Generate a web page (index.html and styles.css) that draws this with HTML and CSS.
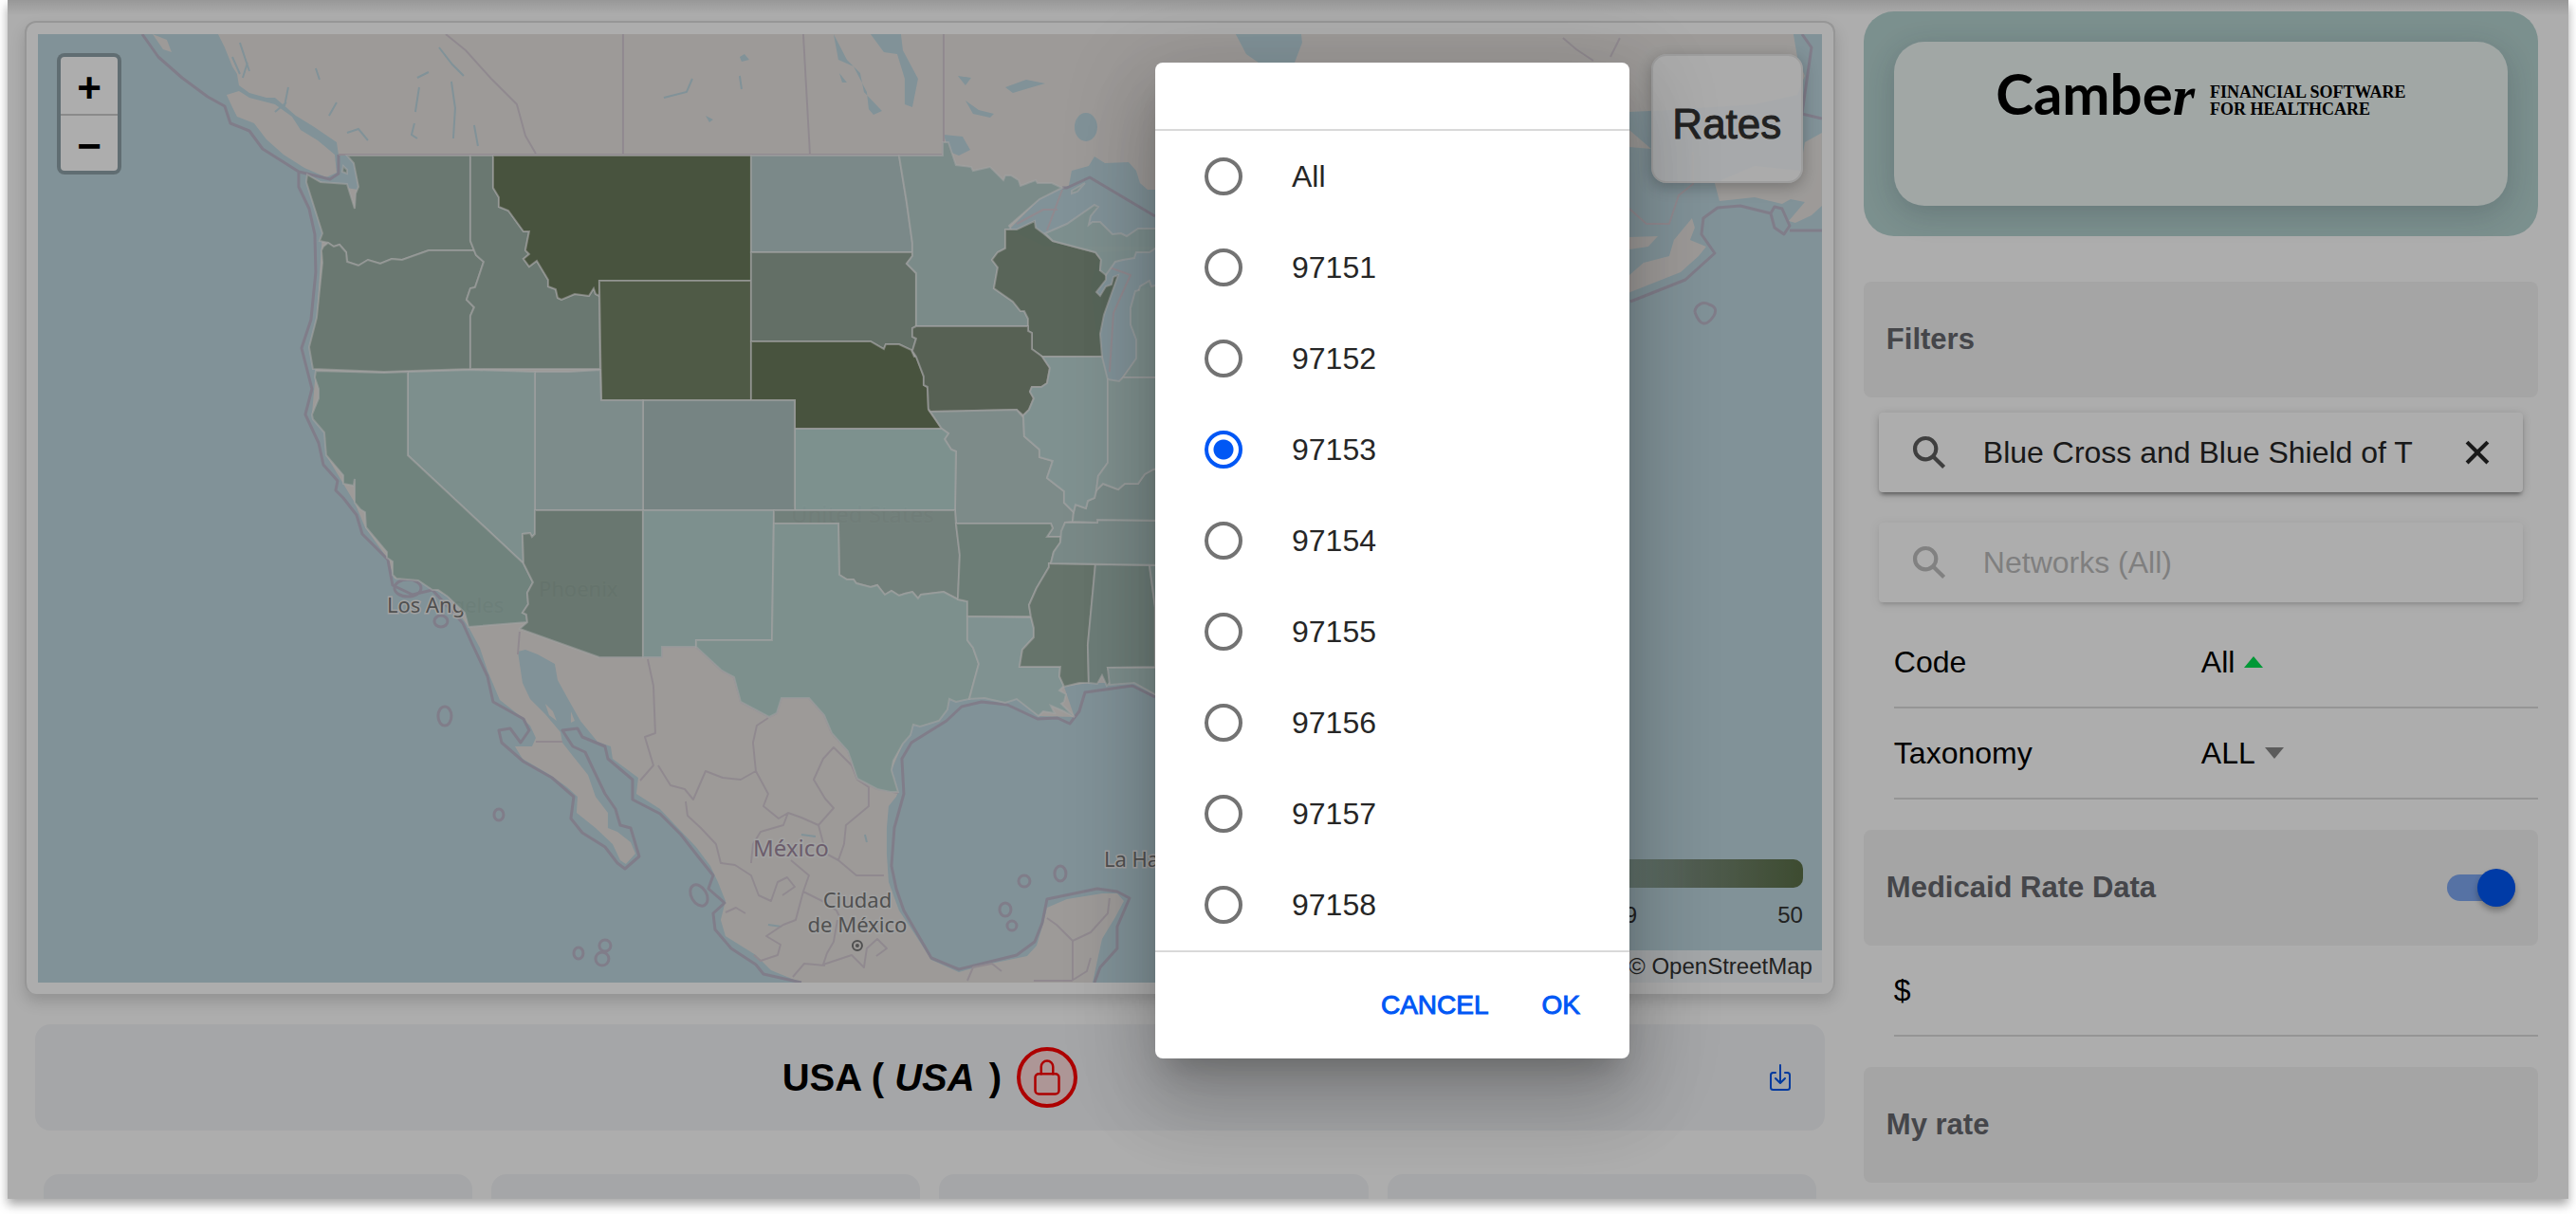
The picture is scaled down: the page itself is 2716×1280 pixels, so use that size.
FILE: index.html
```html
<!DOCTYPE html>
<html lang="en">
<head>
    <meta charset="UTF-8">
    <title>Rates Map</title>
    <link rel="stylesheet" href="styles.css">
</head>
<body>
    <div class="app">
        <main class="content">
            <section class="map-card">
                <div class="map">
                    <svg class="map-svg" viewBox="40 36 1881 1000" preserveAspectRatio="xMidYMid slice">
                        <!-- mainland -->
                        <path class="land" d="M230 36L237 50 245 70 250 78 252 90 263 98 281 103 290 103 312 122 330 133 355 150 357 163 372 164 378 200 345 195 324 184 323 192 340 246 334 335 326 366 333 391 329 437 342 456 344 480 362 510 374 530 385 556 408 588 416 610 441 612 472 629 494 661 506 683 514 707 527 738 546 753 559 765 565 778 561 787 543 787 551 800 580 817 598 830 609 840 608 857 628 873 646 890 654 907 660 911 670 900 665 888 651 877 641 873 641 857 628 840 620 817 604 797 593 783 591 772 575 753 559 737 551 720 548 700 546 687 554 685 567 690 585 700 588 717 599 737 612 760 630 782 644 787 646 800 673 820 671 837 696 853 712 870 734 893 749 913 757 930 765 950 760 970 765 987 797 1007 813 1023 847 1037 1152 1037 1157 1013 1162 990 1176 967 1185 950 1178 942 1162 942 1125 948 1104 957 1099 977 1093 997 1083 1008 1040 1017 1011 1025 982 1012 966 987 948 960 937 930 935 900 935 873 937 850 945 840 947 835 940 812 952 784 963 764 990 760 1001 737 1040 736 1072 737 1095 755 1133 756 1122 724 1148 720 1196 720 1230 740 1400 600 1600 380 1719 308 1772 287 1791 270 1799 260 1782 253 1787 240 1784 230 1765 253 1760 270 1733 277 1718 290 1718 263 1738 260 1748 249 1718 250 1700 200 1718 155 1741 157 1718 137 1700 125 1718 118 1760 116 1850 110 1895 100 1903 80 1895 60 1891 36Z"/>
                        <path class="land" d="M239 100L252 96 263 103 290 110 308 123 317 137 335 148 353 163 355 182 344 187 321 177 299 163 281 147 268 130 250 123 245 113ZM161 36L176 42 181 55 172 52ZM1808 193L1813 212 1850 208 1879 215 1888 210 1903 213 1886 233 1893 235 1910 227 1921 217 1921 140 1903 150 1898 180 1850 175ZM575 742l8 8 4 10-8-6zM602 750l4 10-4 2z"/>
                        <!-- lakes -->
                        <path class="water" d="M1064 242L1096 210 1120 198 1127 196 1130 180 1148 175 1154 165 1165 172 1190 171 1198 180 1202 193 1210 200 1240 200 1240 260 1102 260ZM1160 266L1230 262 1230 300 1200 305 1198 378 1180 402 1168 400 1156 352 1150 300ZM879 36L893 63 907 77 911 97 930 117 921 121 916 115 914 97 900 70 884 63ZM918 36L950 36 952 53 968 83 962 113 954 110 954 83 946 57 932 55ZM885 77l8 10-5 0zM1303 36L1314 57 1327 66 1365 66 1373 45 1372 36ZM995 142l20 2 8 14-12 6-10-4zM1018 106l14 10 16 4-4 4-18-4zM1060 92l22-8 20 4-14 4-20 6zM1010 80l14 2-6 8zM744 122l8 4-4 3zM780 60l5-3 5 6-8 2z"/>
                        <ellipse class="water" cx="1145" cy="134" rx="12" ry="15"/>
                        <path class="river" d="M245 60l8 18M253 45l10 30M261 66l-5 16M300 112l4-20M290 118l12-10M333 72l4 12M355 108l-8 14M440 82l12-6M438 118l4-26M437 130l-3 12 6 4M476 86l4 28-2 32M500 132l4 22M463 50l14 18 12 12M700 103l24-6 6-14M366 140l12-4 10 12M780 80l2 14M845 880l15 2M810 975l14 2M912 880l2 8"/>
                        <!-- borders -->
                        <path class="sea-border" d="M150 36L167 60 192 82 219 102 237 112 243 130 263 138 277 157 315 181 348 189 357 183 357 163M315 181L315 197 326 220 332 247 333 287 328 337 318 367 329 410 322 437 336 467 341 490 356 507 354 517 362 525 376 543 382 563 409 590 414 617 435 627 456 622 488 657 497 677 514 713 520 740 552 758 558 770 549 783 538 768 526 770 529 783 552 803 582 820 605 840 602 863 614 878 638 893 651 910 659 916 674 903 665 873 654 870 649 853 638 837 625 810 617 793 604 787 593 770 609 768 614 777 638 787 641 800 667 822 667 843 696 858 718 880 736 903 752 923 747 937 764 952 752 963 754 980 771 1000 797 1017 805 1027 845 1036"/>
                        <path class="sea-border" d="M1154 1036L1160 1020 1178 1000 1178 977 1191 947 1178 940 1157 937 1104 948 1099 973 1091 993 1072 1007 1011 1022 982 1010 953 960 945 937 940 913 943 873 953 837 951 800 961 783 998 760 1014 745 1035 740 1062 743 1094 758 1115 757 1128 763 1138 750 1144 730 1194 723 1218 735"/>
                        <path class="sea-border" d="M1719 318L1777 295 1808 267 1794 247 1796 230 1811 219 1835 217 1867 225 1871 218 1879 220 1887 238 1881 247 1871 240 1867 225M1887 243H1921M1900 36L1910 50 1900 120 1921 125M1787 329a10 10 0 0 1 15-8q10 3 5 12-12 18-20-4M1120 198h5L1149 187 1218 228"/>
                        <path class="border" d="M357 163H994V150M470 36L491 53 518 83 545 110 554 143 565 162M657 36V163M847 36L854 162M995 36V150M1120 200L1104 243M1648 40l14 12 18 12M1698 60l10-20M1718 220l18 16h24l10-30 15-12V160M1072 236L1100 221H1115M1170 392L1174 330 1192 290 1170 282"/>
                        <path class="border" d="M632 693H698V682H734L761 707 774 714 781 740 811 756 819 752 824 736H853L869 754 877 773 894 792 904 821 925 832 947 836"/>
                        <path class="border" d="M683 695L689 723 691 773 680 777 689 807 675 823M694 807L707 828 722 832 731 843 744 813 762 820 781 822 797 813 794 783 798 765 810 757M797 813L810 837 805 850 821 863 831 857 845 862 863 870 879 852 870 842 858 822 868 800 879 788 898 807 904 822 916 830 916 850 892 870 890 890 884 907 903 923 932 923M723 845L725 860 739 873 755 890 760 910 775 912 792 923 800 944 813 950 820 930 830 925 838 935 825 944M760 910l2 0M786 963L776 957 765 962M792 910L794 890 802 877 826 870 831 857M834 907L853 923 847 940 839 970 826 975 808 987 823 996 820 1007 802 1013 795 1007M847 940l20 10 15 10 5 10M868 1017L872 1005 879 993 883 970M868 1017L898 1007 911 1020 914 1000 925 990 935 1000 924 1008M836 1030l12-14 22 2M863 870l8 30 13 7M1104 968L1114 975 1131 992 1150 983 1168 963 1170 947M1131 992V1033M1020 1034l6-14 20-4 10 8M1090 1034h40l16-10 4-14M565 782h28M546 690l2-24"/>
                        <g class="sea-border">
                            <ellipse cx="469" cy="755" rx="7" ry="10"/>
                            <ellipse cx="526" cy="859" rx="5" ry="6"/>
                            <ellipse cx="610" cy="1005" rx="5" ry="6"/>
                            <ellipse cx="638" cy="997" rx="6" ry="6"/>
                            <ellipse cx="635" cy="1011" rx="7" ry="7"/>
                            <ellipse cx="737" cy="944" rx="8" ry="12" transform="rotate(-30 737 944)"/>
                            <ellipse cx="1080" cy="929" rx="6" ry="6"/>
                            <ellipse cx="1118" cy="921" rx="6" ry="8"/>
                            <ellipse cx="1060" cy="959" rx="6" ry="7"/>
                            <ellipse cx="1067" cy="976" rx="5" ry="5"/>
                            <ellipse cx="430" cy="620" rx="14" ry="9"/>
                            <ellipse cx="465" cy="655" rx="7" ry="6"/>
                        </g>
                        <!-- place names -->
                        <g class="place">
                            <text x="408" y="646">Los Angeles</text>
                            <text x="568" y="629">Phoenix</text>
                            <text x="904" y="957" text-anchor="middle">Ciudad</text>
                            <text x="904" y="983" text-anchor="middle">de México</text>
                            <text x="1164" y="914">La Habana</text>
                        </g>
                        <g class="country">
                            <text x="794" y="903">México</text>
                            <text x="834" y="551">United States</text>
                        </g>
                        <circle class="capital" cx="904" cy="997" r="5"/>
                        <circle class="capital-dot" cx="904" cy="997" r="2"/>
                        <!-- states -->
                        <g class="states">
                            <path fill="#99afa3" d="M366 164L373 172 378 197 375 204 374 220 366 194 338 192 324 184 323 192 340 246 337 254 346 256 352 260 358 258 365 266 366 276 378 280 388 274 401 278 413 273 424 274 452 264 500 264 496 254V164ZM362 175l4 4v4l-5-2z"/>
                            <path fill="#99afa3" d="M346 256L341 260 339 264 340 277 334 335 326 366 330 389 405 392 496 389V333L500 324 492 316 496 304 501 303 510 276 502 269 500 264 452 264 424 274 413 273 401 278 388 274 378 280 366 276 365 266 358 258 352 260Z"/>
                            <path fill="#99afa3" d="M496 164H520V198L526 208V218L536 222 552 244H558L554 264 558 268 552 273 558 281 566 275 578 295V302L586 305 588 314 592 316 606 310 621 312 626 304 628 310 632 312 633 389H496V333L500 324 492 316 496 304 501 303 510 276 502 269 500 264 496 254Z"/>
                            <path fill="#647554" d="M520 164H792V296H632V312L628 310 626 304 621 312 606 310 592 316 588 314 586 305 578 302V295L566 275 558 281 552 273 558 268 554 264 558 244H552L536 222 526 218V208L520 198Z"/>
                            <path fill="#6f8060" d="M632 296H792V422H634Z"/>
                            <path fill="#b3c9c8" d="M792 164H948L956 213 962 256V266H792Z"/>
                            <path fill="#8da092" d="M792 266H962V270L956 278 966 288V344L962 346V355L966 357 962 370 948 363H934L932 368 918 360H792Z"/>
                            <path fill="#647554" d="M792 360H918L932 368 934 363H948L961 369 964 376H966L974 397V406L978 408 979 432 993 452H838V422H792Z"/>
                            <path fill="#b3cbc8" d="M948 164H994V150H1000L1008 174 1024 176 1026 180 1044 176 1058 190 1060 185H1066L1074 190 1076 196 1092 190 1094 193H1109L1120 198 1096 210 1064 238 1066 242H1060V262L1052 266 1046 274 1052 282 1048 304 1068 318 1076 328H1080L1084 336V344H966V288L956 278 962 270V256L956 213Z"/>
                            <path fill="#7d917e" d="M1060 242H1072L1091 233 1092 240 1100 246 1110 254 1155 266 1161 274 1160 285 1166 286V295L1156 308 1160 312 1166 302 1172 300 1174 292 1179 290 1164 332 1160 352 1162 376H1099L1088 368V351L1084 349V336L1080 328H1076L1068 318 1048 304 1052 282 1046 274 1052 266 1060 262Z"/>
                            <path fill="#b8d3d1" d="M1102 246L1125 236 1154 216 1158 218 1150 228 1148 237 1152 234H1160L1173 247 1182 246 1188 249 1200 241H1230V262H1218L1212 266H1198L1196 272 1184 274 1176 276 1166 290 1160 285 1161 274 1155 266 1110 254ZM1230 298L1214 302 1212 296 1202 302 1201 306 1197 307 1192 325V342L1198 358V378L1184 398H1230ZM1130 201l14-8-8 9-6 2z"/>
                            <path fill="#7b8a77" d="M966 344H1084V349L1088 351V368L1099 376 1107 388 1104 404 1098 408H1088L1086 413 1090 420 1085 432 1079 438 1072 432 981 434 979 431 978 408 974 406V397L966 376 962 370 966 357 962 355V346Z"/>
                            <path fill="#b6cbc8" d="M981 434L1072 432 1079 440 1080 460 1096 474V482L1110 486 1104 504 1122 518V530L1132 540 1131 550 1123 551 1119 566H1104L1110 557 1108 552H1008L1007 538 1008 476 1003 474 996 463 1000 457 993 452Z"/>
                            <path fill="#b6d5d1" d="M838 452H993L1000 457 996 463 1003 474 1008 476 1007 538H838Z"/>
                            <path fill="#acc1bf" d="M678 422H838V538H678Z"/>
                            <path fill="#b6cccb" d="M564 392L600 392 633 390 634 422H678V538H564Z"/>
                            <path fill="#b5d2cf" d="M430 392L496 390 564 392V563L561 566 559 562 551 563 552 594 430 480Z"/>
                            <path fill="#a2bfb6" d="M333 391L405 393 430 392V480L552 594 562 614 556 625 557 637 551 646 555 648 556 656 494 661 490 646 472 629 462 622H456L441 612 418 610 414 606V592L408 588V582L386 556 385 540 380 537 374 530V505L373 512 362 510V501L344 480 342 456 330 442 329 437 336 420V410L332 398Z"/>
                            <path fill="#97ada1" d="M564 538H678V693H632L548 663 556 656 555 648 551 646 557 637 556 625 562 614 552 594 551 563 559 562 561 566 564 563Z"/>
                            <path fill="#b6d4d1" d="M678 538H816L814 675H734V682H698V693H678Z"/>
                            <path fill="#a5bbb3" d="M816 538H1007L1008 552 1012 585 1010 632 995 624 971 627 968 631 962 624 954 626 948 628 940 623 933 627 925 617 918 619 903 615 900 611H893L885 606 884 552H816Z"/>
                            <path fill="#b5d4cf" d="M816 552H884L885 606 893 611H900L903 615 918 619 925 617 933 627 940 623 948 628 954 626 962 624 968 631 971 627 995 624 1010 632 1020 634V675L1026 683 1032 700 1026 722 1022 737 1008 740 1001 737 999 748 990 760 970 766 963 764 960 775 952 784 942 802 940 812 947 835H939L925 832 904 821 894 792 877 773 869 754 853 736H824L819 752 811 756 781 740 774 714 761 707 734 682V675H814Z"/>
                            <path fill="#9cb6ab" d="M1008 552H1108L1110 557 1104 566H1118V572L1111 582 1108 594H1106V598L1093 620 1085 638 1087 650H1020V634L1010 632 1012 585Z"/>
                            <path fill="#bbd7d5" d="M1020 650L1087 651 1090 662V672L1078 685 1075 703H1118L1117 713 1122 723 1117 728 1124 732 1122 740 1119 742 1133 756 1122 750 1108 744 1112 752 1100 750 1095 755 1072 737 1060 741 1038 736 1022 737 1026 722 1032 700 1026 683 1020 675Z"/>
                            <path fill="#92a89a" d="M1106 594L1155 595 1147 680 1148 720 1138 720 1122 724 1117 713 1118 703H1075L1078 685 1090 672V662L1087 650 1085 638 1093 620 1106 598Z"/>
                            <path fill="#9db6af" d="M1155 595L1212 596 1218 640V703L1168 704 1172 718 1167 723 1162 712 1157 721 1148 720 1147 680Z"/>
                            <path fill="#b0c9c5" d="M1212 596H1230V703H1218V640Z"/>
                            <path fill="#b5d0cd" d="M1168 704H1230V740L1218 732 1196 720 1170 722Z"/>
                            <path fill="#b0c9c5" d="M1123 551H1157V548L1230 549V596L1108 594 1111 582 1118 572 1119 560Z"/>
                            <path fill="#b0c9c5" d="M1132 540L1134 532 1145 536 1147 528 1154 525 1156 517 1163 510 1179 516 1186 510H1200L1207 500 1216 495 1230 492V549L1157 548V551L1131 550Z"/>
                            <path fill="#b8d5d4" d="M1099 376H1162L1168 400V488L1158 502 1156 517 1154 525 1147 528 1145 536 1134 532 1132 540 1122 530V518L1104 504 1110 486 1096 482V474L1080 460 1079 438 1085 432 1090 420 1086 413 1088 408 1098 408 1104 404 1107 388Z"/>
                            <path fill="#b8d3d1" d="M1168 400L1180 402 1184 398H1230V492L1216 495 1207 500 1200 510H1186L1179 516 1163 510 1156 517 1158 502 1168 488Z"/>
                        </g>
                    </svg>

                    <div class="zoom-control">
                        <button type="button" class="zoom-btn" aria-label="Zoom in">+</button>
                        <button type="button" class="zoom-btn" aria-label="Zoom out">−</button>
                    </div>
                    <button type="button" class="rates-btn">Rates</button>
                    <div class="legend">
                        <div class="legend-bar"></div>
                        <div class="legend-labels"><span>28</span><span>39</span><span>50</span></div>
                    </div>
                    <div class="attribution">© OpenStreetMap</div>
                </div>
            </section>

            <section class="title-bar">
                <h1 class="title">USA ( <em>USA</em> )</h1>
                <button type="button" class="lock-btn" aria-label="Locked">
                    <svg class="lock-icon" viewBox="0 0 512 512">
                        <path d="M336 208v-95a80 80 0 0 0-160 0v95"/>
                        <rect x="96" y="208" width="320" height="272" rx="48"/>
                    </svg>
                </button>
                <button type="button" class="download-btn" aria-label="Download">
                    <svg class="download-icon" viewBox="0 0 512 512">
                        <path d="M336 176h40a40 40 0 0 1 40 40v208a40 40 0 0 1-40 40H136a40 40 0 0 1-40-40V216a40 40 0 0 1 40-40h40"/>
                        <path d="M176 272l80 80 80-80M256 48v288"/>
                    </svg>
                </button>
            </section>

            <section class="stats">
                <div class="stat"></div>
                <div class="stat"></div>
                <div class="stat"></div>
                <div class="stat"></div>
            </section>
        </main>

        <aside class="sidebar">
            <div class="brand">
                <div class="brand-inner">
                    <span class="brand-name">Cambe<i>r</i></span>
                    <span class="brand-tag">FINANCIAL SOFTWARE<br>FOR HEALTHCARE</span>
                </div>
            </div>

            <h2 class="section-title filters-title">Filters</h2>
            <div class="search">
                <svg class="search-icon" viewBox="0 0 512 512"><path d="M464 428L339.92 303.9a160.48 160.48 0 0 0 30.72-94.58C370.64 120.37 298.27 48 209.32 48S48 120.37 48 209.32s72.37 161.32 161.32 161.32a160.48 160.48 0 0 0 94.58-30.72L428 464zM209.32 319.69a110.38 110.38 0 1 1 110.37-110.37 110.5 110.5 0 0 1-110.37 110.37z"/></svg>
                <input type="text" class="search-input" aria-label="Payer" value="Blue Cross and Blue Shield of T">
                <button type="button" class="clear-btn" aria-label="Clear">
                    <svg class="clear-icon" viewBox="0 0 512 512"><path d="M400 145.49L366.51 112 256 222.51 145.49 112 112 145.49 222.51 256 112 366.51 145.49 400 256 289.49 366.51 400 400 366.51 289.49 256z"/></svg>
                </button>
            </div>
            <div class="search search-disabled">
                <svg class="search-icon" viewBox="0 0 512 512"><path d="M464 428L339.92 303.9a160.48 160.48 0 0 0 30.72-94.58C370.64 120.37 298.27 48 209.32 48S48 120.37 48 209.32s72.37 161.32 161.32 161.32a160.48 160.48 0 0 0 94.58-30.72L428 464zM209.32 319.69a110.38 110.38 0 1 1 110.37-110.37 110.5 110.5 0 0 1-110.37 110.37z"/></svg>
                <input type="text" class="search-input" aria-label="Networks" placeholder="Networks (All)" disabled>
            </div>

            <div class="row">
                <label class="row-label" for="code">Code</label>
                <button type="button" class="row-select" id="code">All<span class="arrow arrow-up"></span></button>
            </div>
            <div class="row">
                <label class="row-label" for="taxonomy">Taxonomy</label>
                <button type="button" class="row-select" id="taxonomy">ALL<span class="arrow arrow-down"></span></button>
            </div>

            <h2 class="section-title">
                <label for="medicaid">Medicaid Rate Data</label>
                <input type="checkbox" class="toggle" id="medicaid" checked>
            </h2>
            <div class="row">
                <label class="row-label" for="rate">$</label>
                <input type="text" class="row-input" id="rate">
            </div>

            <h2 class="section-title">My rate</h2>
        </aside>

        <div class="backdrop">
            <form class="alert" role="dialog" aria-label="Code">
                <div class="alert-head"></div>
                <div class="alert-list">
                    <label class="option"><input type="radio" name="code">All</label>
                    <label class="option"><input type="radio" name="code">97151</label>
                    <label class="option"><input type="radio" name="code">97152</label>
                    <label class="option"><input type="radio" name="code" checked>97153</label>
                    <label class="option"><input type="radio" name="code">97154</label>
                    <label class="option"><input type="radio" name="code">97155</label>
                    <label class="option"><input type="radio" name="code">97156</label>
                    <label class="option"><input type="radio" name="code">97157</label>
                    <label class="option"><input type="radio" name="code">97158</label>
                </div>
                <div class="alert-buttons">
                    <button type="button" class="alert-btn">CANCEL</button>
                    <button type="button" class="alert-btn">OK</button>
                </div>
            </form>
        </div>
    </div>
</body>
</html>
```
FILE: styles.css
```css
* {
    box-sizing: border-box;
}
body {
    margin: 0;
    background: #fff;
    font-family: "Liberation Sans", Arial, sans-serif;
    font-size: 32px;
    color: #000;
}
button, input {
    font-family: inherit;
    font-size: inherit;
    color: inherit;
}
button {
    padding: 0;
    border: none;
    background: none;
    cursor: pointer;
}
h1, h2 {
    margin: 0;
}
.app {
    position: relative;
    display: grid;
    grid-template-columns: 51fr 19fr;
    column-gap: 30px;
    height: calc(100vh - 16px);
    margin: 0 8px;
    padding: 0 32px 0 18px;
    overflow: hidden;
    background: linear-gradient(#e0e0e0, #fff 16px);
}
/* soft shadow round the app window */
body::before {
    content: "";
    position: absolute;
    inset: 0 8px 16px;
    box-shadow: 0 6px 10px rgba(0, 0, 0, 0.35);
}

/* map */
.content {
    min-width: 0;
    padding-top: 22px;
}
.map-card {
    padding: 12px;
    border: 2px solid #dedede;
    border-bottom: none;
    border-radius: 12px;
    background: #fff;
    box-shadow: 0 8px 16px rgba(0, 0, 0, 0.16);
}
.map {
    position: relative;
    height: 1000px;
    overflow: hidden;
    background: #bed7e0;
}
.map-svg {
    display: block;
    width: 100%;
    height: 100%;
}
.land {
    fill: #e7e4e1;
}
.water {
    fill: #bed7e0;
}
.river {
    fill: none;
    stroke: #bed7e0;
    stroke-width: 2;
}
.border, .sea-border {
    fill: none;
    stroke-linejoin: round;
}
.border {
    stroke: #d5cbd3;
    stroke-width: 2;
}
.sea-border {
    stroke: #bdb8cb;
    stroke-width: 3;
}
.place, .country {
    font-family: "Noto Sans", sans-serif;
    font-size: 22px;
    fill: #777;
    stroke: #eee;
    stroke-width: 3;
    paint-order: stroke;
}
.country {
    font-size: 24px;
    fill: #a08aa0;
}
.capital {
    fill: none;
    stroke: #777;
    stroke-width: 2;
}
.capital-dot {
    fill: #777;
}
.states path {
    fill-opacity: 0.95;
    stroke: #eee;
    stroke-opacity: 0.6;
    stroke-width: 2;
}
.zoom-control {
    position: absolute;
    top: 20px;
    left: 20px;
    display: flex;
    flex-direction: column;
    width: 68px;
    border: 4px solid rgba(0, 0, 0, 0.25);
    border-radius: 8px;
    background: #fff;
    background-clip: padding-box;
}
.zoom-btn {
    height: 60px;
    padding-top: 6px;
    font-size: 44px;
    font-weight: bold;
    line-height: 52px;
}
.zoom-btn + .zoom-btn {
    border-top: 2px solid #ccc;
}
.rates-btn {
    position: absolute;
    top: 21px;
    right: 20px;
    width: 160px;
    height: 136px;
    padding-top: 12px;
    border: 2px solid #e8e8e8;
    border-radius: 16px;
    background: rgba(255, 255, 255, 0.88);
    box-shadow: 0 4px 16px rgba(0, 0, 0, 0.25);
    font-size: 44px;
    color: #333;
    -webkit-text-stroke: 1px #333;
}
.legend {
    position: absolute;
    right: 20px;
    bottom: 56px;
    width: 376px;
}
.legend-bar {
    height: 30px;
    border-radius: 10px;
    background: linear-gradient(90deg, #b6d5d1, #93aca4 50%, #778977 70%, #5b7048);
}
.legend-labels {
    display: flex;
    justify-content: space-between;
    margin-top: 14px;
    font-size: 24px;
    line-height: 30px;
    color: #333;
}
.attribution {
    position: absolute;
    right: 0;
    bottom: 0;
    padding: 0 10px;
    background: rgba(255, 255, 255, 0.8);
    font-size: 24px;
    line-height: 34px;
    color: #333;
}

/* title and stats */
.title-bar {
    position: relative;
    display: flex;
    justify-content: center;
    align-items: center;
    gap: 16px;
    height: 112px;
    margin: 32px 11px 0;
    border-radius: 16px;
    background: #f4f5f8;
}
.title {
    font-size: 40px;
    font-weight: bold;
}
.title em {
    margin-right: 4px;
}
.lock-btn {
    display: flex;
    justify-content: center;
    align-items: center;
    width: 64px;
    height: 64px;
    border: 4px solid #f00;
    border-radius: 50%;
    background: #ffdede;
}
.lock-icon, .download-icon {
    width: 40px;
    height: 40px;
    fill: none;
    stroke: #f00;
    stroke-width: 32;
    stroke-linecap: round;
    stroke-linejoin: round;
}
.download-btn {
    position: absolute;
    right: 31px;
    display: flex;
}
.download-icon {
    width: 32px;
    height: 32px;
    stroke: #0054e9;
}
.stats {
    display: grid;
    grid-template-columns: repeat(4, 1fr);
    gap: 20px;
    margin: 46px 20px 0;
}
.stat {
    height: 160px;
    border-radius: 16px;
    background: #f4f5f8;
}

/* sidebar */
.sidebar {
    min-width: 0;
    padding-top: 12px;
}
.brand {
    padding: 32px;
    border-radius: 32px;
    background: #b6d4d1;
}
.brand-inner {
    display: flex;
    justify-content: center;
    gap: 16px;
    height: 173px;
    padding-top: 20px;
    border-radius: 32px;
    background: #edf6f4;
    box-shadow: 0 8px 32px rgba(31, 38, 60, 0.2);
}
.brand-name {
    font-family: Lato, sans-serif;
    font-size: 60px;
    font-weight: bold;
    line-height: 68px;
}
.brand-name i {
    font-family: "Liberation Serif", serif;
}
.brand-tag {
    padding-top: 24px;
    font-family: "Liberation Serif", serif;
    font-size: 18px;
    font-weight: bold;
    line-height: 18px;
}
.section-title {
    display: flex;
    justify-content: space-between;
    align-items: center;
    height: 122px;
    margin-top: 32px;
    padding: 0 24px;
    border-radius: 8px;
    background: #f3f3f3;
    font-size: 31px;
    font-weight: bold;
    color: #66676d;
}
.filters-title {
    margin-top: 48px;
}
.search {
    display: flex;
    align-items: center;
    height: 84px;
    margin: 16px 16px 0;
    padding: 0 26px 0 32px;
    border-radius: 4px;
    background: #fff;
    box-shadow: 0 4px 4px -2px rgba(0, 0, 0, 0.4), 0 2px 10px rgba(0, 0, 0, 0.2);
}
.search-icon {
    flex: none;
    width: 42px;
    height: 42px;
    margin-right: 36px;
    fill: #5e5e5e;
}
.search-input {
    flex: 1;
    min-width: 0;
    padding: 0;
    border: none;
    background: none;
    color: #262626;
}
.clear-btn {
    display: flex;
    margin-left: 32px;
}
.clear-icon {
    width: 44px;
    height: 44px;
    fill: #262626;
}
.search-disabled {
    margin: 32px 16px 16px;
    opacity: 0.4;
}
.search-input::placeholder {
    color: #595959;
    opacity: 1;
}
.row {
    display: flex;
    align-items: center;
    height: 96px;
    margin-left: 32px;
    border-bottom: 2px solid #dcdcdc;
}
.row-label {
    width: 324px;
}
.row-select {
    display: flex;
    align-items: center;
    gap: 10px;
}
.row-input {
    flex: 1;
    min-width: 0;
    border: none;
    background: none;
}
.arrow {
    border: 10px solid transparent;
}
.arrow-up {
    border-top: none;
    border-bottom: 12px solid #00e050;
}
.arrow-down {
    border-bottom: none;
    border-top: 12px solid #888;
}
.toggle {
    appearance: none;
    display: flex;
    align-items: center;
    justify-content: flex-end;
    width: 72px;
    height: 28px;
    margin: 0;
    border-radius: 14px;
    background: #7fa8f2;
}
.toggle::before {
    content: "";
    width: 40px;
    height: 40px;
    border-radius: 50%;
    background: #0057f5;
    box-shadow: 0 4px 6px rgba(0, 0, 0, 0.3);
}

/* code picker */
.backdrop {
    position: absolute;
    inset: 0;
    display: flex;
    justify-content: center;
    align-items: flex-start;
    padding: 66px 0 0 220px;
    background: rgba(0, 0, 0, 0.32);
}
.alert {
    width: 500px;
    border-radius: 8px;
    background: #fff;
    box-shadow: 0 22px 30px -14px rgba(0, 0, 0, 0.2), 0 48px 76px 6px rgba(0, 0, 0, 0.14), 0 18px 92px 16px rgba(0, 0, 0, 0.12);
}
.alert-head {
    height: 72px;
    border-bottom: 2px solid #d9d9d9;
}
.option {
    display: flex;
    align-items: center;
    gap: 52px;
    height: 96px;
    padding-left: 52px;
    color: #262626;
}
.option input {
    appearance: none;
    width: 40px;
    height: 40px;
    margin: 0;
    border: 4px solid #737373;
    border-radius: 50%;
}
.option input:checked {
    border-color: #0057f5;
    background: radial-gradient(circle, #0057f5 10px, #fff 11px);
}
.alert-buttons {
    display: flex;
    justify-content: flex-end;
    align-items: center;
    gap: 56px;
    height: 114px;
    padding-right: 52px;
    border-top: 2px solid #d9d9d9;
}
.alert-btn {
    font-size: 28px;
    color: #0057f5;
    -webkit-text-stroke: 1px #0057f5;
}
```
